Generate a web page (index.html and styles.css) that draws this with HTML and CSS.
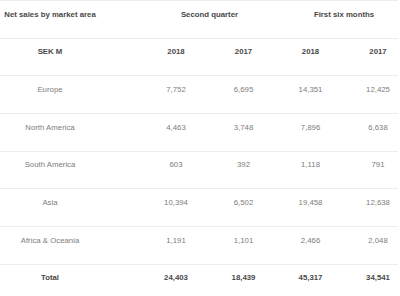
FILE: index.html
```html
<!DOCTYPE html>
<html>
<head>
<meta charset="utf-8">
<link rel="stylesheet" href="styles.css">
</head>
<body>
<div class="table">
  <div class="row head">
    <div class="cell first">Net sales by market area</div>
    <div class="cell span2">Second quarter</div>
    <div class="cell span2 last-span">First six months</div>
  </div>
  <div class="row head">
    <div class="cell first">SEK M</div>
    <div class="cell">2018</div>
    <div class="cell">2017</div>
    <div class="cell">2018</div>
    <div class="cell last">2017</div>
  </div>
  <div class="row">
    <div class="cell first">Europe</div>
    <div class="cell">7,752</div>
    <div class="cell">6,695</div>
    <div class="cell">14,351</div>
    <div class="cell last">12,425</div>
  </div>
  <div class="row">
    <div class="cell first">North America</div>
    <div class="cell">4,463</div>
    <div class="cell">3,748</div>
    <div class="cell">7,896</div>
    <div class="cell last">6,638</div>
  </div>
  <div class="row">
    <div class="cell first">South America</div>
    <div class="cell">603</div>
    <div class="cell">392</div>
    <div class="cell">1,118</div>
    <div class="cell last">791</div>
  </div>
  <div class="row">
    <div class="cell first">Asia</div>
    <div class="cell">10,394</div>
    <div class="cell">6,502</div>
    <div class="cell">19,458</div>
    <div class="cell last">12,638</div>
  </div>
  <div class="row">
    <div class="cell first">Africa &amp; Oceania</div>
    <div class="cell">1,191</div>
    <div class="cell">1,101</div>
    <div class="cell">2,466</div>
    <div class="cell last">2,048</div>
  </div>
  <div class="row head total">
    <div class="cell first">Total</div>
    <div class="cell">24,403</div>
    <div class="cell">18,439</div>
    <div class="cell">45,317</div>
    <div class="cell last">34,541</div>
  </div>
</div>
</body>
</html>
```

FILE: styles.css
```css
html, body {
  margin: 0;
  padding: 0;
  background: #ffffff;
  overflow: hidden;
}
body {
  font-family: "Liberation Sans", Arial, sans-serif;
  font-size: 7.8px;
  line-height: 9px;
  color: #7d7d7d;
}
.table {
  width: 398px;
  border-top: 1px solid #ececec;
}
.row {
  display: grid;
  grid-template-columns: 142px 68px 67px 67px 54px;
  height: 36.7px;
  box-sizing: content-box;
  align-items: start;
  padding-top: 0;
  border-bottom: 1px solid #ececec;
}
.row.total {
  border-bottom: none;
}
.cell {
  text-align: center;
  white-space: nowrap;
  padding-top: 8.5px;
}
.first {
  padding-right: 42px;
}
.last {
  padding-left: 14px;
}
.span2 {
  grid-column: span 2;
}
.last-span {
  margin-right: -13px;
}
.head .cell {
  font-weight: bold;
  color: #484848;
}
```
